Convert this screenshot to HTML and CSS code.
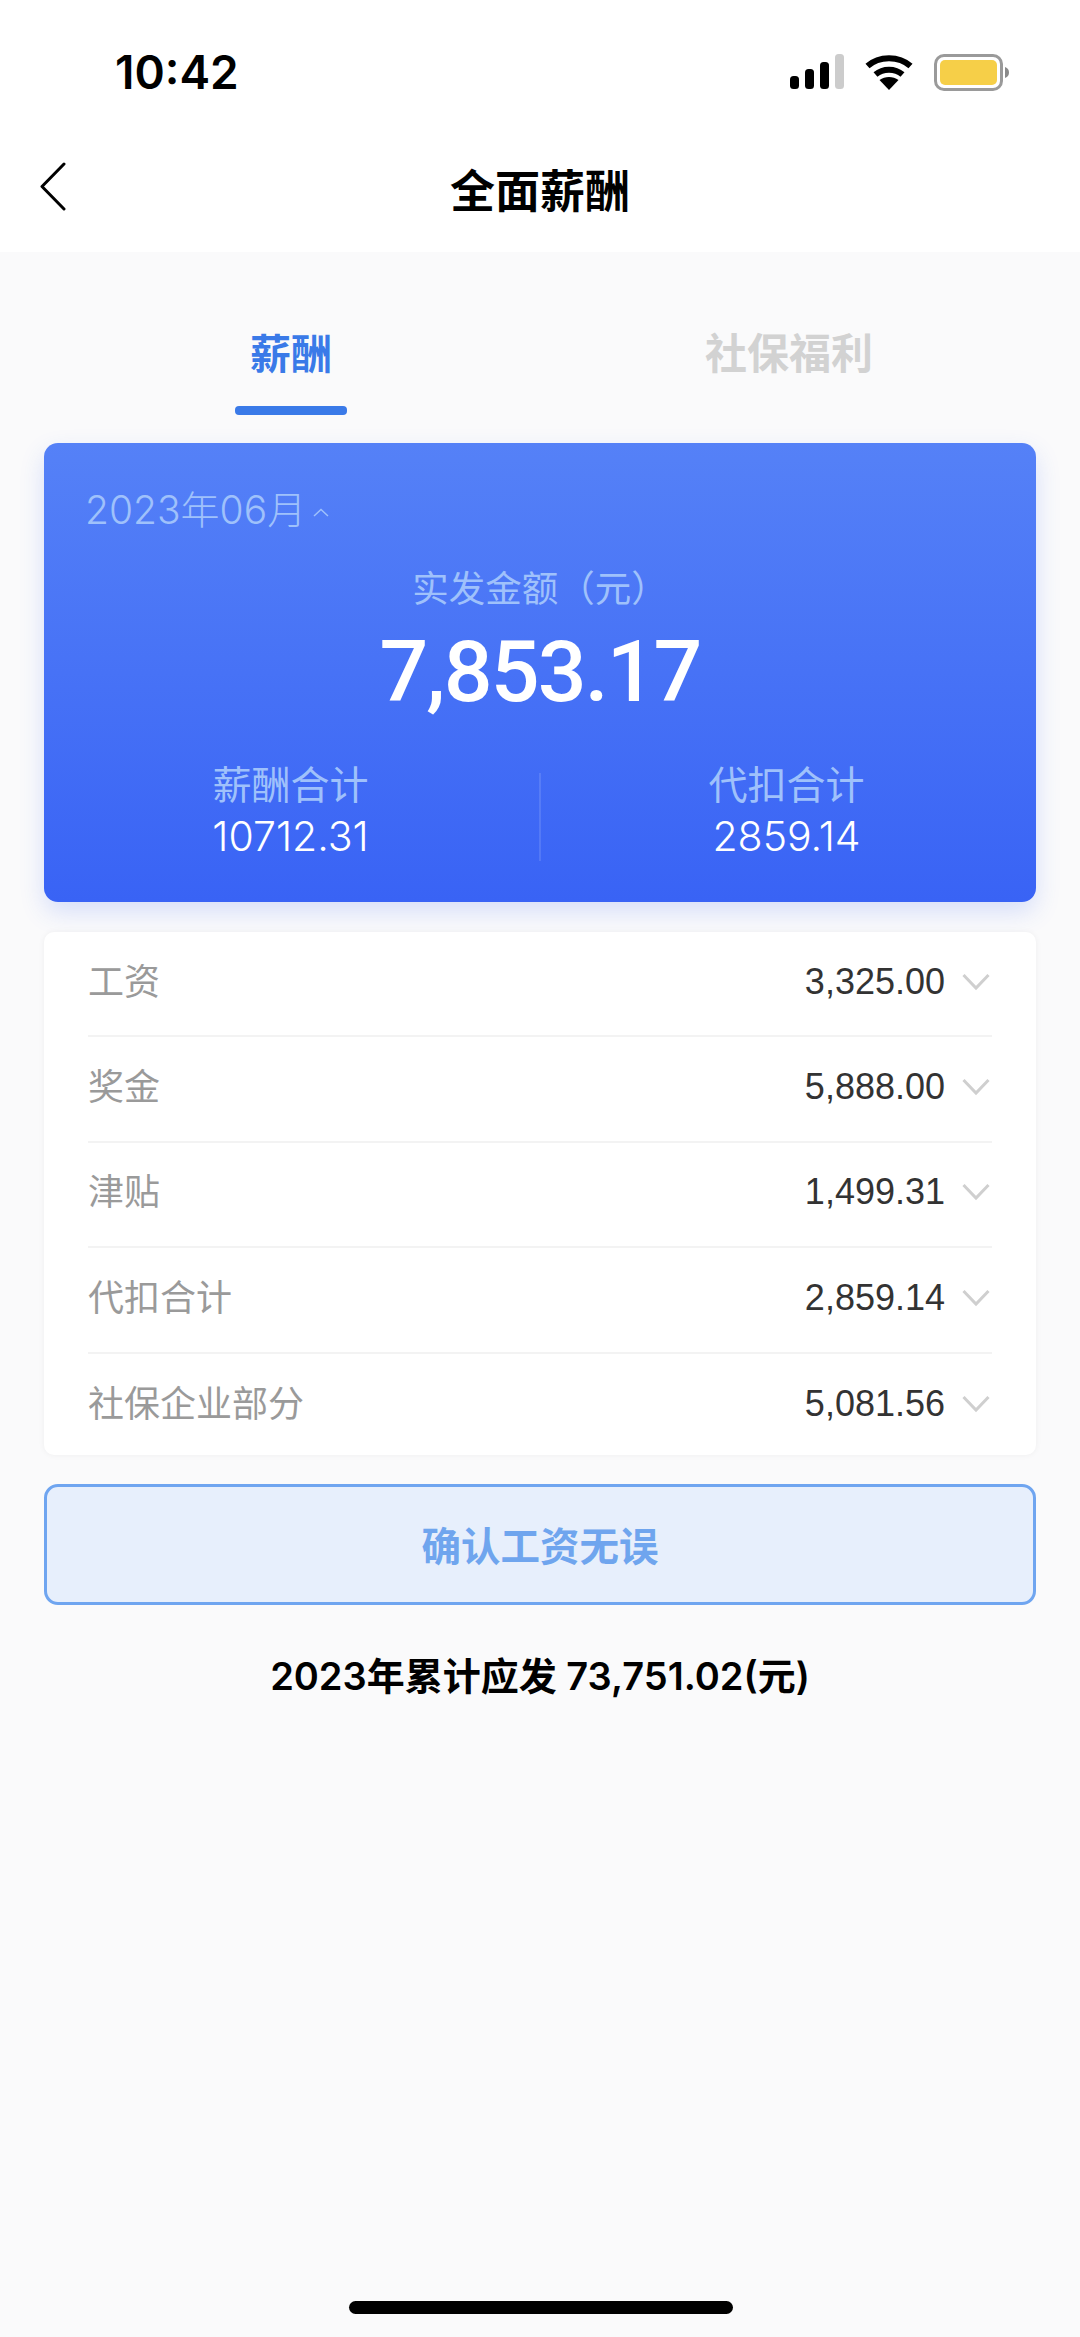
FILE: index.html
```html
<!DOCTYPE html>
<html lang="zh-CN">
<head>
<meta charset="utf-8">
<title>全面薪酬</title>
<link rel="stylesheet" href="styles.css">
</head>
<body>
<div class="app">
  <header class="top">
    <div class="status">
      <span class="time">10:42</span>
      <div class="status-icons">
        <svg class="sig" width="54" height="36" viewBox="0 0 54 36"><rect x="0" y="22" width="9" height="13" rx="3.5" fill="#000"/><rect x="15" y="15" width="9" height="20" rx="3.5" fill="#000"/><rect x="30" y="8" width="9" height="27" rx="3.5" fill="#000"/><rect x="45" y="0" width="9" height="35" rx="3.5" fill="#ccc"/></svg>
        <svg class="wifi" width="48" height="36" viewBox="0 0 48 36"><path d="M2.5 12 C14 1.5 34 1.5 45.5 12" fill="none" stroke="#000" stroke-width="6"/><path d="M10.5 20.5 C18 14 30 14 37.5 20.5" fill="none" stroke="#000" stroke-width="6"/><path d="M14.5 26 C20 22 28 22 33.5 26 L24 36 Z" fill="#000"/></svg>
        <svg class="batt" width="76" height="38" viewBox="0 0 76 38"><rect x="1.5" y="1.5" width="66" height="34" rx="8.5" fill="#fff" stroke="#9a9a9a" stroke-width="3"/><rect x="6" y="6" width="57" height="25" rx="5" fill="#f6cf48"/><path d="M71 13 C74 14 75 16 75 18.500 C75 21 74 23 71 24 Z" fill="#8a8a8a"/></svg>
      </div>
    </div>
    <div class="nav">
      <svg class="back" width="28" height="50" viewBox="0 0 28 50"><path d="M25 2 L3 24.500 L25 47" fill="none" stroke="#000" stroke-width="3" stroke-linecap="round" stroke-linejoin="round"/></svg>
      <h1 class="title">全面薪酬</h1>
    </div>
  </header>

  <main class="content">
    <div class="tabs">
      <div class="tab tab-on">薪酬<i class="tab-line"></i></div>
      <div class="tab tab-off">社保福利</div>
    </div>

    <section class="card">
      <div class="date">2023年06月<svg class="caret" width="16" height="10" viewBox="0 0 16 10"><path d="M1 8 L8 1.500 L15 8" fill="none" stroke="#9fc1fb" stroke-width="1.500"/></svg></div>
      <div class="net-label">实发金额（元）</div>
      <div class="net">7,853.17</div>
      <div class="sums">
        <div class="sum"><div class="sum-label">薪酬合计</div><div class="sum-val">10712.31</div></div>
        <div class="sum"><div class="sum-label">代扣合计</div><div class="sum-val">2859.14</div></div>
      </div>
    </section>

    <section class="list">
      <div class="row"><span class="row-label">工资</span><span class="row-val">3,325.00</span><svg class="chev" width="28" height="18" viewBox="0 0 28 18"><path d="M1.500 2 L14 15 L26.500 2" fill="none" stroke="#cfcfcf" stroke-width="3"/></svg></div>
      <div class="row"><span class="row-label">奖金</span><span class="row-val">5,888.00</span><svg class="chev" width="28" height="18" viewBox="0 0 28 18"><path d="M1.500 2 L14 15 L26.500 2" fill="none" stroke="#cfcfcf" stroke-width="3"/></svg></div>
      <div class="row"><span class="row-label">津贴</span><span class="row-val">1,499.31</span><svg class="chev" width="28" height="18" viewBox="0 0 28 18"><path d="M1.500 2 L14 15 L26.500 2" fill="none" stroke="#cfcfcf" stroke-width="3"/></svg></div>
      <div class="row"><span class="row-label">代扣合计</span><span class="row-val">2,859.14</span><svg class="chev" width="28" height="18" viewBox="0 0 28 18"><path d="M1.500 2 L14 15 L26.500 2" fill="none" stroke="#cfcfcf" stroke-width="3"/></svg></div>
      <div class="row"><span class="row-label">社保企业部分</span><span class="row-val">5,081.56</span><svg class="chev" width="28" height="18" viewBox="0 0 28 18"><path d="M1.500 2 L14 15 L26.500 2" fill="none" stroke="#cfcfcf" stroke-width="3"/></svg></div>
    </section>

    <div class="confirm">确认工资无误</div>
    <div class="total">2023年累计应发 73,751.02(元)</div>
  </main>
  <div class="home"><i class="home-bar"></i></div>
</div>
</body>
</html>
```
FILE: styles.css
```css
* { box-sizing: border-box; }
html, body { margin: 0; padding: 0; }
body { background: #fafafb; font-family: "Liberation Sans", "Noto Sans CJK SC", sans-serif; }
.app { width: 1080px; height: 2337px; display: flex; flex-direction: column; overflow: hidden; }

.top { background: #fff; height: 252px; flex: none; }
.status { height: 132px; padding: 46px 0 0 115px; display: flex; justify-content: space-between; align-items: flex-start; }
.time { font-family: "Inter", "Liberation Sans", sans-serif; font-weight: 600; font-size: 46px; line-height: 52px; color: #000; }
.status-icons { display: flex; align-items: flex-start; gap: 21px; padding: 8px 70px 0 0; }
.nav { height: 120px; position: relative; display: flex; align-items: center; justify-content: center; }
.back { position: absolute; left: 39px; top: 30px; }
.title { margin: 0; font-size: 45px; font-weight: 700; line-height: 60px; color: #000; font-family: "Noto Sans CJK SC", sans-serif; position: relative; top: -3px; }

.content { flex: 1; padding: 0 44px; display: flex; flex-direction: column; }
.tabs { display: flex; height: 191px; }
.tab { flex: 1; text-align: center; font-family: "Noto Sans CJK SC", sans-serif; font-size: 42px; font-weight: 700; line-height: 56px; color: #d2d2d2; padding-top: 71px; position: relative; }
.tab:first-child { flex: none; width: 494px; }
.tab-on { color: #3a7ae8; font-size: 41px; }
.tab-off { padding-left: 4px; }
.tab-line { position: absolute; left: 191px; top: 154px; width: 112px; height: 9px; border-radius: 4px; background: #3a7ae8; }

.card { height: 459px; border-radius: 14px; background: linear-gradient(180deg, #5581f7 0%, #3963f5 100%); box-shadow: 0 10px 24px rgba(57, 99, 245, 0.18); padding: 45px 0 0; display: flex; flex-direction: column; }
.date { padding-left: 41px; color: #9fc1fb; font-size: 39px; font-weight: 300; line-height: 44px; display: flex; align-items: center; font-family: "Inter", "Noto Sans CJK SC", sans-serif; }
.caret { margin: 6px 0 0 7px; }
.net-label { text-align: center; color: #9fc1fb; font-family: "Noto Sans CJK SC", sans-serif; font-size: 36.500px; line-height: 50px; margin-top: 30px; }
.net { text-align: center; color: #fff; font-family: Roboto, sans-serif; font-weight: 500; font-size: 86px; letter-spacing: -1.900px; line-height: 100px; margin-top: 10px; }
.sums { display: flex; margin-top: 51px; position: relative; }
.sums::after { content: ""; position: absolute; left: 495px; top: 0; width: 2px; height: 88px; background: rgba(255, 255, 255, 0.12); }
.sum { flex: 1; text-align: center; padding-right: 3px; }
.sum-label { color: #9fc1fb; font-family: "Noto Sans CJK SC", sans-serif; font-size: 39px; line-height: 52px; margin-top: -17px; }
.sum-val { color: #fff; font-family: "Inter", sans-serif; font-weight: 300; font-size: 41px; line-height: 50px; margin-top: 3px; }

.list { margin-top: 30px; height: 523px; background: #fff; border-radius: 10px; box-shadow: 0 0 6px rgba(0, 0, 0, 0.05); padding: 0 44px; }
.row { height: 105.400px; display: flex; align-items: center; padding-bottom: 4px; border-bottom: 2px solid #f3f3f3; }
.row:last-child { border-bottom: 0; }
.row-label { flex: 1; color: #9a9a9a; font-family: "Noto Sans CJK SC", sans-serif; font-size: 36px; position: relative; top: -3px; }
.row-val { color: #333; font-size: 36px; }
.chev { margin: 0 2px 0 17px; }

.confirm { margin-top: 29px; height: 121px; border: 3px solid #6fa5f0; border-radius: 14px; background: #e7effc; color: #6fa5ee; font-family: "Noto Sans CJK SC", sans-serif; font-size: 39.500px; font-weight: 700; display: flex; align-items: center; justify-content: center; padding-bottom: 3px; }
.total { margin-top: 45px; text-align: center; font-size: 38px; line-height: 52px; font-weight: 600; color: #000; font-family: "Inter", "Noto Sans CJK SC", sans-serif; }

.home { height: 36px; flex: none; }
.home-bar { display: block; margin-left: 349px; width: 384px; height: 13px; border-radius: 7px; background: #000; }
```
